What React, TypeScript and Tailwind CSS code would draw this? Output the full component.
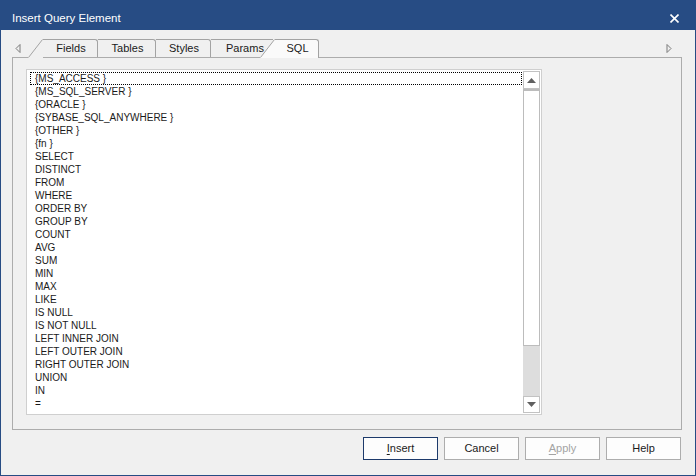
import React from 'react';

const items = [
  '{MS_ACCESS }',
  '{MS_SQL_SERVER }',
  '{ORACLE }',
  '{SYBASE_SQL_ANYWHERE }',
  '{OTHER }',
  '{fn }',
  'SELECT',
  'DISTINCT',
  'FROM',
  'WHERE',
  'ORDER BY',
  'GROUP BY',
  'COUNT',
  'AVG',
  'SUM',
  'MIN',
  'MAX',
  'LIKE',
  'IS NULL',
  'IS NOT NULL',
  'LEFT INNER JOIN',
  'LEFT OUTER JOIN',
  'RIGHT OUTER JOIN',
  'UNION',
  'IN',
  '=',
];

function Slant({ active }: { active?: boolean }) {
  return (
    <svg width="15" height="19" viewBox="0 0 15 19" className="block shrink-0">
      <polygon points="0,18.5 14.5,0.5 15,0.5 15,19 0,19" fill={active ? '#fafafa' : '#f0f0f0'} />
      <line x1="0.5" y1="18.5" x2="14.5" y2="0.5" stroke="#a3a3a3" strokeWidth="1" />
    </svg>
  );
}

function Tab({ label, w }: { label: string; w: string }) {
  return (
    <div className={`${w} h-[18px] border-t border-r border-[#a3a3a3] rounded-tr-[3px] bg-[#f0f0f0] flex items-center justify-center pl-[2px] text-[11px] text-[#1a1a1a]`}>
      {label}
    </div>
  );
}

function Btn({ label, first, rest, variant }: { label?: string; first: string; rest: string; variant?: 'default' | 'disabled' }) {
  const border = variant === 'default' ? 'border-[#1d3a6b]' : 'border-[#adadad]';
  const color = variant === 'disabled' ? 'text-[#a3a3a3]' : 'text-[#1a1a1a]';
  return (
    <div className={`w-[75px] h-[23px] border ${border} bg-[#fdfdfd] flex items-center justify-center text-[11px] ${color}`}>
      {label ? label : (<><span className="underline underline-offset-2">{first}</span>{rest}</>)}
    </div>
  );
}

export default function App() {
  return (
    <div className="w-[696px] h-[476px] border border-[#274c84] bg-[#f0f0f0] flex flex-col" style={{ fontFamily: '"Liberation Sans", Arial, sans-serif' }}>
      {/* Title bar */}
      <div className="h-[29px] bg-[#274c84] flex items-center justify-between pt-[6px] pl-[11px] pr-[16px] text-white text-[11.5px]">
        <span>Insert Query Element</span>
        <svg width="9" height="9" viewBox="0 0 9 9">
          <path d="M0.5 0.5 L8.5 8.5 M8.5 0.5 L0.5 8.5" stroke="white" strokeWidth="1.6" />
        </svg>
      </div>

      {/* Tabs */}
      <div className="mt-[9px] ml-[11px] mr-[13px] relative z-10 -mb-px flex items-end h-[19px]">
        <div className="w-[16px] h-[18px] flex items-center pl-[3px] pb-[2px]">
          <svg width="6" height="9" viewBox="0 0 6 9">
            <path d="M5 0.5 L1 4.5 L5 8.5 Z" fill="none" stroke="#7a7a7a" strokeWidth="1" />
          </svg>
        </div>
        <div className="flex items-end h-[19px]">
          <Slant />
          <div className="h-[19px] flex items-start">
            <Tab label="Fields" w="w-[55px]" />
          </div>
          <div className="h-[19px] flex items-start">
            <Tab label="Tables" w="w-[58px]" />
          </div>
          <div className="h-[19px] flex items-start">
            <Tab label="Styles" w="w-[55px]" />
          </div>
          <div className="h-[19px] flex items-start">
            <div className="w-[62px] h-[18px] border-t border-[#a3a3a3] bg-[#f0f0f0] flex items-center pl-[15px] text-[11px] text-[#1a1a1a]">
              Params
            </div>
          </div>
          <div className="flex items-end -ml-[13px]">
            <Slant active />
            <div className="w-[44px] h-[19px] border-t border-r border-[#a3a3a3] rounded-tr-[3px] bg-[#fafafa] flex items-center justify-center pb-px pl-[2px] text-[11px] text-[#1a1a1a]">
              SQL
            </div>
          </div>
        </div>
        <div className="flex-1" />
        <div className="h-[18px] flex items-center pr-[10px] pb-[2px]">
          <svg width="6" height="9" viewBox="0 0 6 9">
            <path d="M1 0.5 L5 4.5 L1 8.5 Z" fill="none" stroke="#7a7a7a" strokeWidth="1" />
          </svg>
        </div>
      </div>

      {/* Panel */}
      <div className="ml-[11px] w-[670px] h-[373px] border border-[#acacac] pt-[11px] pl-[13px]">
        <div className="w-[516px] h-[346px] border border-[#cfcfcf] bg-white flex">
          <div className="flex-1 pt-[2px] pl-[3px] pr-[1px] overflow-hidden text-[10px] text-[#1a1a1a]">
            {items.map((it, i) => (
              <div
                key={it}
                className={`h-[13px] leading-[12px] pl-[4px] ${i === 0 ? 'border border-dotted border-black pl-[3px]' : 'border border-transparent'}`}
              >
                {it}
              </div>
            ))}
          </div>
          {/* Scrollbar */}
          <div className="w-[18px] flex flex-col py-px pr-px bg-white">
            <div className="h-[18px] border border-[#c2c2c2] bg-white flex items-center justify-center">
              <svg width="9" height="5" viewBox="0 0 9 5">
                <path d="M4.5 0 L9 5 L0 5 Z" fill="#606060" />
              </svg>
            </div>
            <div className="h-[257px] border border-[#bcbcbc] border-t-[2px] bg-white" />
            <div className="flex-1 bg-[#dddddd]" />
            <div className="h-[17px] border border-[#c2c2c2] bg-white flex items-center justify-center">
              <svg width="9" height="5" viewBox="0 0 9 5">
                <path d="M0 0 L9 0 L4.5 5 Z" fill="#606060" />
              </svg>
            </div>
          </div>
        </div>
      </div>

      {/* Buttons */}
      <div className="mt-[7px] ml-[362px] flex gap-[6px]">
        <Btn first="I" rest="nsert" variant="default" />
        <Btn label="Cancel" first="" rest="" />
        <Btn first="A" rest="pply" variant="disabled" />
        <Btn label="Help" first="" rest="" />
      </div>
    </div>
  );
}
